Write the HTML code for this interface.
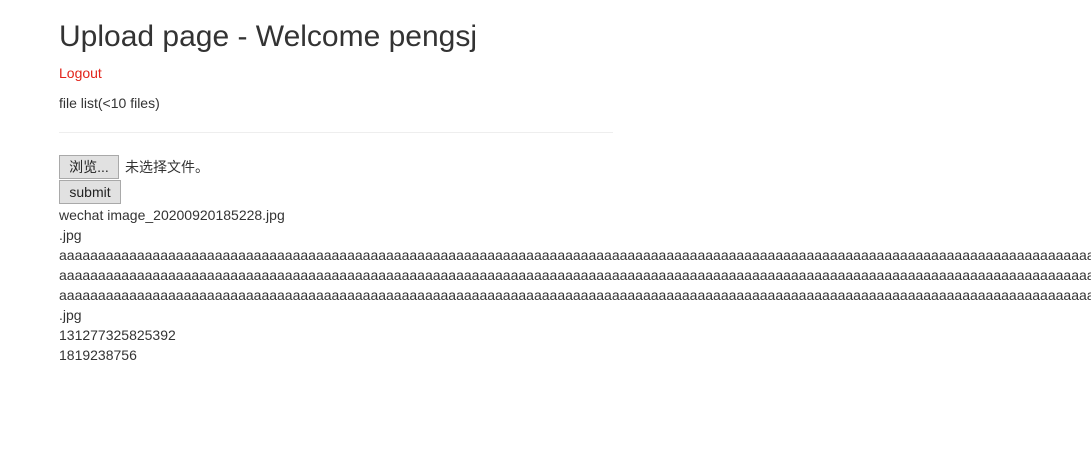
<!DOCTYPE html>
<html><head><meta charset="utf-8"><style>
html,body{margin:0;padding:0;background:#fff;width:1091px;height:454px;overflow:hidden}
body{font-family:"Liberation Sans","Noto Sans CJK SC",sans-serif;font-size:14px;color:#333;position:relative}
.a{position:absolute;left:59px;white-space:nowrap;line-height:20px}
h1{position:absolute;left:59px;top:17px;margin:0;font-size:30px;font-weight:normal;line-height:40px;color:#333}
.btn{position:absolute;left:59px;height:22px;border:1px solid #a9a9a9;background:#e1e1e1;font-size:14px;line-height:22px;text-align:center;color:#222;box-sizing:border-box;height:24px}
hr{position:absolute;left:59px;top:132px;width:554px;margin:0;border:0;border-top:1px solid #eee}
</style></head><body>
<h1>Upload page - Welcome pengsj</h1>
<div class="a" style="top:63px;color:#e2231a">Logout</div>
<div class="a" style="top:93px">file list(&lt;10 files)</div>
<hr>
<div class="btn" style="top:155px;width:60px">浏览...</div>
<div class="a" style="left:125px;top:157px">未选择文件。</div>
<div class="btn" style="top:180px;width:62px">submit</div>
<div class="a" style="top:205px">wechat image_20200920185228.jpg</div>
<div class="a" style="top:225px">.jpg</div>
<div class="a" style="top:245px">aaaaaaaaaaaaaaaaaaaaaaaaaaaaaaaaaaaaaaaaaaaaaaaaaaaaaaaaaaaaaaaaaaaaaaaaaaaaaaaaaaaaaaaaaaaaaaaaaaaaaaaaaaaaaaaaaaaaaaaaaaaaaaaaaaaaaaaaa</div>
<div class="a" style="top:265px">aaaaaaaaaaaaaaaaaaaaaaaaaaaaaaaaaaaaaaaaaaaaaaaaaaaaaaaaaaaaaaaaaaaaaaaaaaaaaaaaaaaaaaaaaaaaaaaaaaaaaaaaaaaaaaaaaaaaaaaaaaaaaaaaaaaaaaaaa</div>
<div class="a" style="top:285px">aaaaaaaaaaaaaaaaaaaaaaaaaaaaaaaaaaaaaaaaaaaaaaaaaaaaaaaaaaaaaaaaaaaaaaaaaaaaaaaaaaaaaaaaaaaaaaaaaaaaaaaaaaaaaaaaaaaaaaaaaaaaaaaaaaaaaaaaa</div>
<div class="a" style="top:305px">.jpg</div>
<div class="a" style="top:325px">131277325825392</div>
<div class="a" style="top:345px">1819238756</div>
</body></html>
